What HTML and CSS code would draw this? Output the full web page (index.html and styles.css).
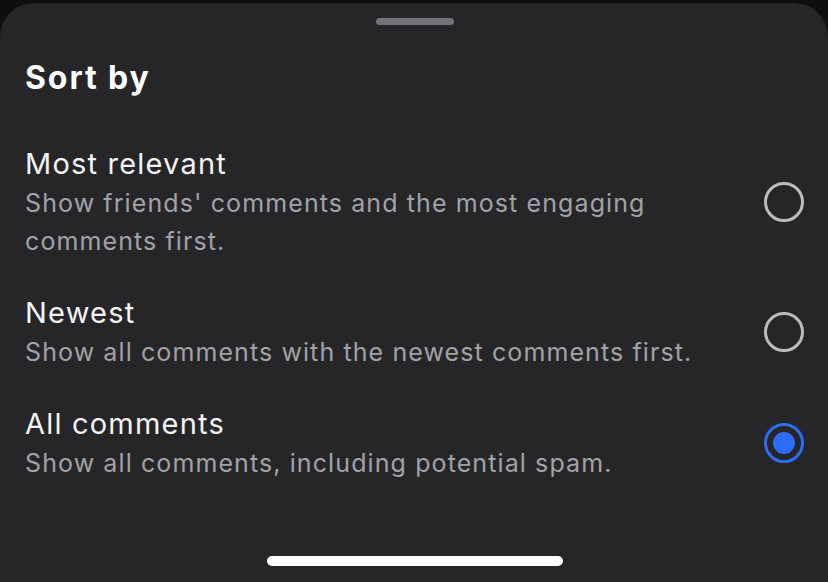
FILE: index.html
```html
<!DOCTYPE html>
<html lang="en">
<head>
  <meta charset="UTF-8" />
  <meta name="viewport" content="width=device-width, initial-scale=1" />
  <title>Sort by</title>
  <link rel="stylesheet" href="styles.css">
</head>
<body>
  <div class="sheet">
    <div class="grabber"></div>
    <h1>Sort by</h1>

    <div class="options">
      <label class="option">
        <div class="option-text">
          <div class="option-title">Most relevant</div>
          <div class="option-desc">Show friends' comments and the most engaging comments first.</div>
        </div>
        <span class="radio"></span>
      </label>

      <label class="option">
        <div class="option-text">
          <div class="option-title">Newest</div>
          <div class="option-desc">Show all comments with the newest comments first.</div>
        </div>
        <span class="radio"></span>
      </label>

      <label class="option">
        <div class="option-text">
          <div class="option-title">All comments</div>
          <div class="option-desc">Show all comments, including potential spam.</div>
        </div>
        <span class="radio checked"></span>
      </label>
    </div>

    <div class="home-bar"></div>
  </div>
</body>
</html>
```

FILE: styles.css
```css
html, body {
  height: 100%;
}
body {
  margin: 0;
  background-color: #0e0e0f;
  font-family: 'Inter', 'Liberation Sans', sans-serif;
  color: #f2f2f4;
  overflow: hidden;
}
.sheet {
  box-sizing: border-box;
  margin-top: 3px;
  height: 579px;
  background-color: #262628;
  border-radius: 34px 34px 0 0;
  padding: 15px 24px 0 25px;
  display: flex;
  flex-direction: column;
}
.grabber {
  align-self: center;
  width: 78px;
  height: 7px;
  border-radius: 4px;
  background-color: #737377;
  margin-left: 1px;
}
h1 {
  margin: 33px 0 0;
  font-size: 32px;
  line-height: 40px;
  font-weight: 700;
  letter-spacing: 1.9px;
  color: #ffffff;
}
.options {
  margin-top: 45px;
  display: flex;
  flex-direction: column;
  gap: 32px;
}
.option {
  display: flex;
  align-items: center;
  justify-content: space-between;
  cursor: pointer;
}
.option-text {
  max-width: 680px;
}
.option-title {
  font-size: 29px;
  line-height: 41px;
  font-weight: 400;
  letter-spacing: 1.2px;
  color: #f4f4f6;
}
.option-desc {
  font-size: 25px;
  line-height: 38px;
  color: #a2a2a6;
  letter-spacing: 1.1px;
}
.radio {
  box-sizing: border-box;
  flex: none;
  width: 40px;
  height: 40px;
  border-radius: 50%;
  border: 3px solid #bcbcbe;
  display: flex;
  align-items: center;
  justify-content: center;
}
.radio.checked {
  border-color: #2c6cf6;
}
.radio.checked::after {
  content: "";
  width: 22px;
  height: 22px;
  border-radius: 50%;
  background-color: #2c6cf6;
}
.home-bar {
  align-self: center;
  margin-top: auto;
  margin-bottom: 16px;
  margin-left: 1px;
  width: 296px;
  height: 10px;
  border-radius: 5px;
  background-color: #ffffff;
}
```
